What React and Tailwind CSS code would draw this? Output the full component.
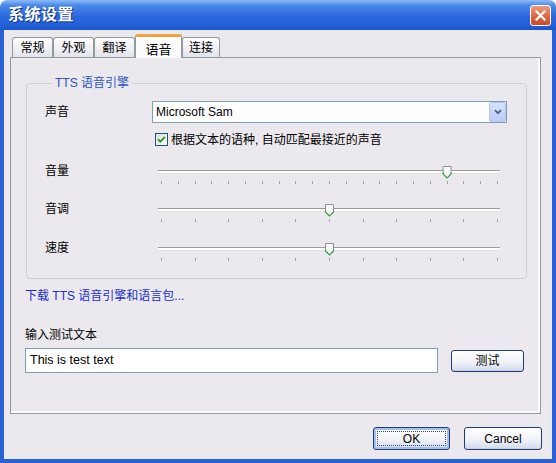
import React from 'react';

const FONT = "font-['Liberation_Sans','Noto_Sans_CJK_SC',sans-serif]";

const tabs = [
  { label: '常规', w: 'w-[41px]' },
  { label: '外观', w: 'w-[41px]' },
  { label: '翻译', w: 'w-[41px]' },
  { label: '语音', w: 'w-[47px]', active: true },
  { label: '连接', w: 'w-[38px]' },
];

const sliders = [
  { label: '音量', steps: 20, value: 17, gap: 'mt-[18px]' },
  { label: '音调', steps: 10, value: 5, gap: 'mt-[17px]' },
  { label: '速度', steps: 10, value: 5, gap: 'mt-[18px]' },
];

const Slider = ({ steps, value }) => {
  const span = 336;
  const xc = 3.5 + (value * span) / steps;
  return (
    <svg width="342" height="21" viewBox="0 0 342 21">
      <rect x="0" y="6" width="342" height="1" fill="#9d9c98" />
      <rect x="0" y="7" width="342" height="2" fill="#ffffff" />
      <rect x="0" y="9" width="342" height="1" fill="#e2e1dd" />
      {Array.from({ length: steps + 1 }).map((_, i) => {
        const x = Math.round(3 + (i * span) / steps) + 0.5;
        return <line key={i} x1={x} x2={x} y1="17" y2="20" stroke="#a3a3a3" strokeWidth="1" />;
      })}
      <path
        d={`M${xc - 4} 2.5 H${xc + 4} V10 L${xc} 14 L${xc - 4} 10 Z`}
        fill="#f7f7f4"
        stroke="#8594a4"
        strokeWidth="1"
      />
      <path
        d={`M${xc - 4} 8.5 V10 L${xc} 14 L${xc + 4} 10 V8.5`}
        fill="none"
        stroke="#3fa64c"
        strokeWidth="1.2"
      />
    </svg>
  );
};

const XpButton = ({ children, className = '', focused }) => (
  <div
    className={`flex rounded-[3px] border border-[#1f3f72] bg-[linear-gradient(to_bottom,#ffffff,#f1f3f8_55%,#d2daea)] text-[12px] text-black ${
      focused ? 'shadow-[inset_0_0_0_2px_#9fbef2]' : 'shadow-[inset_0_-1px_0_#c3cde0]'
    } ${className}`}
  >
    <div
      className={`flex flex-1 items-center justify-center ${
        focused ? 'm-[3px] border border-dotted border-[#444]' : ''
      }`}
    >
      {children}
    </div>
  </div>
);

export default function App() {
  return (
    <div className={`w-[556px] h-[463px] flex flex-col rounded-t-[7px] overflow-hidden ${FONT} text-[12px] text-black`}>
      {/* title bar */}
      <div className="h-[30px] shrink-0 flex items-center justify-between pl-[8px] pr-[5px] bg-[linear-gradient(to_bottom,#8cbaf5_0%,#4a88ea_18%,#2a67dc_55%,#2260d8_85%,#1c55cc_100%)]">
        <span className="text-[16px] font-bold text-white tracking-[0.5px] [text-shadow:1px_1px_0_#0b2a8a]">系统设置</span>
        <div className="w-[21px] h-[21px] rounded-[3px] border border-white bg-[linear-gradient(to_bottom,#ee9b7f,#dd6a45_50%,#c94a24)] flex items-center justify-center">
          <svg width="11" height="11" viewBox="0 0 11 11">
            <path d="M1.5 1.5 L9.5 9.5 M9.5 1.5 L1.5 9.5" stroke="#fff" strokeWidth="2.2" strokeLinecap="square" />
          </svg>
        </div>
      </div>

      {/* body */}
      <div className="flex-1 flex flex-col bg-[#ebe9ed] border-x-[4px] border-b-[4px] border-[#2a60d6]">
        {/* tabs */}
        <div className="flex items-end pl-[8px] pt-[4px] relative z-10 -mb-px">
          {tabs.map((t) =>
            t.active ? (
              <div
                key={t.label}
                className={`${t.w} h-[24px] flex justify-center pt-[3px] rounded-t-[3px] border-x border-t-[3px] border-x-[#919b9c] border-t-[#f0a33c] bg-[#fbfbfc] text-[13px]`}
              >
                {t.label}
              </div>
            ) : (
              <div
                key={t.label}
                className={`${t.w} h-[20px] mb-px flex items-center justify-center pt-px rounded-t-[3px] border border-b-0 border-[#919b9c] bg-[linear-gradient(to_bottom,#ffffff,#f1f1f5_50%,#e2e4ec)] text-[12px]`}
              >
                {t.label}
              </div>
            )
          )}
        </div>

        {/* panel */}
        <div className="ml-[6px] w-[531px] h-[357px] border border-[#919b9c] shadow-[inset_-2px_-2px_0_#ffffff] pl-[14px] pt-[17px]">
          <fieldset className="ml-[1px] w-[501px] rounded-[4px] border border-[#d0cfd4] px-[18px] pb-[16px]">
            <legend className="ml-[7px] px-[3px] leading-[16px] text-[12px] text-[#2c55bd]">TTS 语音引擎</legend>

            <div className="mt-[10px] flex items-center h-[22px]">
              <span className="w-[107px]">声音</span>
              <div className="w-[355px] h-[22px] flex items-center border border-[#7f9db9] bg-white">
                <span className="flex-1 pl-[3px]">Microsoft Sam</span>
                <div className="w-[17px] h-[20px] flex items-center justify-center rounded-[2px] border border-[#b7c8ee] bg-[linear-gradient(to_bottom,#d6e2fb,#b9cdf6)]">
                  <svg width="8" height="6" viewBox="0 0 8 6">
                    <path d="M1 1.2 L4 4.2 L7 1.2" fill="none" stroke="#4d6185" strokeWidth="1.8" />
                  </svg>
                </div>
              </div>
            </div>

            <div className="mt-[10px] ml-[110px] flex items-center h-[13px]">
              <svg width="13" height="13" viewBox="0 0 13 13">
                <defs>
                  <linearGradient id="cb" x1="0" y1="0" x2="1" y2="1">
                    <stop offset="0" stopColor="#dcdcd7" />
                    <stop offset="1" stopColor="#ffffff" />
                  </linearGradient>
                </defs>
                <rect x="0.5" y="0.5" width="12" height="12" fill="url(#cb)" stroke="#1c5180" />
                <path d="M3 6.2 L5.3 8.6 L10 3.8" fill="none" stroke="#21a121" strokeWidth="1.9" />
              </svg>
              <span className="ml-[3px]">根据文本的语种, 自动匹配最接近的声音</span>
            </div>

            {sliders.map((s) => (
              <div key={s.label} className={`flex ${s.gap}`}>
                <span className="w-[113px] leading-[14px]">{s.label}</span>
                <Slider steps={s.steps} value={s.value} />
              </div>
            ))}
          </fieldset>

          <div className="mt-[9px] leading-[16px] text-[#1a2fc8]">下载 TTS 语音引擎和语言包...</div>
          <div className="mt-[23px] leading-[16px]">输入测试文本</div>
          <div className="mt-[5px] flex items-center">
            <div className="w-[413px] h-[25px] flex items-center border border-[#7f9db9] bg-white px-[4px] text-[12.5px]">
              This is test text
            </div>
            <XpButton className="ml-[13px] w-[73px] h-[22px]">测试</XpButton>
          </div>
        </div>

        {/* bottom buttons */}
        <div className="mt-[13px] flex justify-end gap-[14px] pr-[10px]">
          <XpButton focused className="w-[77px] h-[23px]">OK</XpButton>
          <XpButton className="w-[78px] h-[23px]">Cancel</XpButton>
        </div>
      </div>
    </div>
  );
}
